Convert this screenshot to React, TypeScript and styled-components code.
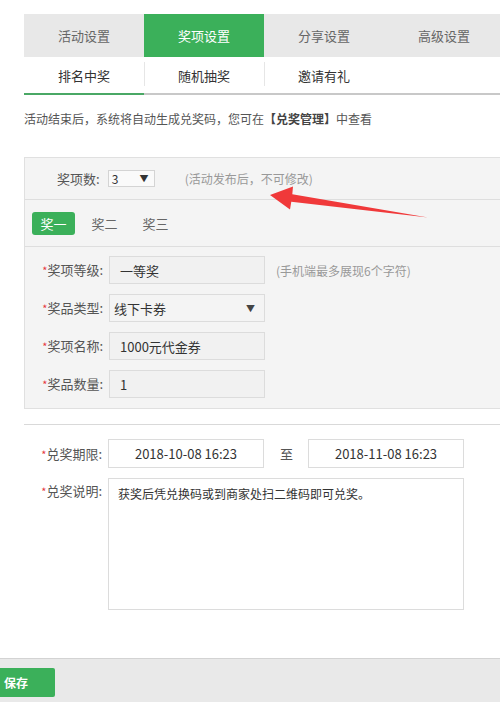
import React from "react";
import styled, { createGlobalStyle } from "styled-components";

const GREEN = "#3bb05a";

const GlobalStyle = createGlobalStyle`
  html, body { margin: 0; padding: 0; background: #fff; }
  body {
    font-family: "Noto Sans CJK SC", "Microsoft YaHei", sans-serif;
    color: #333;
    overflow: hidden;
  }
  * { box-sizing: border-box; }
`;

const Page = styled.div`
  position: relative;
  width: 500px;
  height: 702px;
  display: flex;
  flex-direction: column;
  overflow: hidden;
`;

const Main = styled.div`
  padding: 14px 0 0 24px;
  width: 540px;
`;

const TopTabs = styled.div`
  display: flex;
  background: #e8e8e8;
`;

const TopTab = styled.div<{ $active?: boolean }>`
  width: 120px;
  height: 43px;
  display: flex;
  align-items: center;
  justify-content: center;
  font-size: 13px;
  background: ${(p) => (p.$active ? GREEN : "#e8e8e8")};
  color: ${(p) => (p.$active ? "#fff" : "#666")};
`;

const SubTabs = styled.div`
  display: flex;
  border-bottom: 2px solid #c8c8c8;
`;

const SubTab = styled.div<{ $active?: boolean; $sep?: boolean }>`
  position: relative;
  width: 120px;
  height: 38px;
  margin-bottom: -2px;
  display: flex;
  align-items: center;
  justify-content: center;
  font-size: 13px;
  color: #333;
  border-bottom: 2px solid ${(p) => (p.$active ? "#4aa865" : "transparent")};
  &::before {
    content: "";
    display: ${(p) => (p.$sep ? "block" : "none")};
    position: absolute;
    left: 0;
    top: 5px;
    bottom: 7px;
    width: 1px;
    background: #e6e6e6;
  }
`;

const Info = styled.div`
  margin-top: 15px;
  font-size: 12px;
  line-height: 18px;
  color: #555;
  b { color: #444; font-weight: bold; }
`;

const Panel = styled.div`
  margin-top: 29px;
  background: #f4f4f4;
  border: 1px solid #e0e0e0;
  border-right: none;
`;

const CountRow = styled.div`
  height: 42px;
  display: flex;
  align-items: center;
  padding-left: 32px;
  border-bottom: 1px solid #dedede;
  font-size: 13px;
  color: #555;
`;

const MiniSelect = styled.div`
  width: 47px;
  height: 17px;
  margin-left: 8px;
  border: 1px solid #d4d4d4;
  background: #fafafa;
  display: flex;
  align-items: center;
  justify-content: space-between;
  padding: 0 5px 0 3px;
  font-size: 12px;
  color: #333;
  span { font-size: 9px; }
`;

const Hint = styled.span<{ $ml: number }>`
  margin-left: ${(p) => p.$ml}px;
  font-size: 12px;
  color: #999;
`;

const PrizeTabs = styled.div`
  height: 47px;
  display: flex;
  align-items: center;
  gap: 8px;
  padding-left: 7px;
  border-bottom: 1px solid #dedede;
`;

const PrizeTab = styled.div<{ $active?: boolean }>`
  width: 43px;
  height: 23px;
  border-radius: 3px;
  display: flex;
  align-items: center;
  justify-content: center;
  font-size: 13px;
  background: ${(p) => (p.$active ? GREEN : "transparent")};
  color: ${(p) => (p.$active ? "#fff" : "#666")};
`;

const FormBody = styled.div`
  padding: 9px 0 10px 0;
  display: flex;
  flex-direction: column;
  gap: 10px;
`;

const Row = styled.div<{ $top?: boolean }>`
  display: flex;
  align-items: ${(p) => (p.$top ? "flex-start" : "center")};
`;

const Label = styled.div<{ $w: number; $pt?: number }>`
  width: ${(p) => p.$w}px;
  padding-right: 6px;
  padding-top: ${(p) => p.$pt ?? 0}px;
  text-align: right;
  font-size: 13px;
  line-height: 18px;
  color: #555;
  white-space: nowrap;
  i { color: #e5383b; font-style: normal; font-size: 11px; }
`;

const Field = styled.div<{ $center?: boolean; $white?: boolean; $h?: number }>`
  width: 156px;
  height: ${(p) => p.$h ?? 28}px;
  border: 1px solid #dcdcdc;
  background: ${(p) => (p.$white ? "#fff" : "#f1f1f1")};
  display: flex;
  align-items: center;
  justify-content: ${(p) => (p.$center ? "center" : "space-between")};
  padding: ${(p) => (p.$center ? "0" : "0 10px 0 10px")};
  font-size: 13px;
  color: #333;
`;

const SelectField = styled(Field)`
  padding: 0 9px 0 4px;
  background: #f4f4f4;
  span { font-size: 9px; color: #444; }
`;

const Divider = styled.div`
  margin-top: 15px;
  height: 1px;
  background: #d9d9d9;
`;

const Bottom = styled.div`
  padding-top: 14px;
  display: flex;
  flex-direction: column;
  gap: 10px;
`;

const To = styled.span`
  margin: 0 15px 0 16px;
  font-size: 13px;
  color: #555;
`;

const TextArea = styled.div`
  width: 356px;
  height: 132px;
  border: 1px solid #dcdcdc;
  background: #fff;
  padding: 6px 9px;
  font-size: 12px;
  line-height: 18px;
  color: #333;
`;

const Footer = styled.div`
  margin-top: auto;
  height: 44px;
  background: #e9e9e9;
  border-top: 1px solid #d3d3d3;
  padding-top: 9px;
`;

const SaveButton = styled.div`
  width: 55px;
  height: 29px;
  background: ${GREEN};
  color: #fff;
  font-weight: bold;
  font-size: 12px;
  display: flex;
  align-items: center;
  padding-left: 4px;
  border-radius: 0 2px 2px 0;
`;

const Arrow = styled.svg`
  position: absolute;
  left: 0;
  top: 0;
  pointer-events: none;
`;

export default function App() {
  return (
    <Page>
      <GlobalStyle />
      <Main>
        <TopTabs>
          <TopTab>活动设置</TopTab>
          <TopTab $active>奖项设置</TopTab>
          <TopTab>分享设置</TopTab>
          <TopTab>高级设置</TopTab>
        </TopTabs>
        <SubTabs>
          <SubTab $active>排名中奖</SubTab>
          <SubTab $sep>随机抽奖</SubTab>
          <SubTab $sep>邀请有礼</SubTab>
        </SubTabs>
        <Info>
          活动结束后，系统将自动生成兑奖码，您可在<b>【兑奖管理】</b>中查看
        </Info>
        <Panel>
          <CountRow>
            奖项数:
            <MiniSelect>
              3<span>▼</span>
            </MiniSelect>
            <Hint $ml={30}>(活动发布后，不可修改)</Hint>
          </CountRow>
          <PrizeTabs>
            <PrizeTab $active>奖一</PrizeTab>
            <PrizeTab>奖二</PrizeTab>
            <PrizeTab>奖三</PrizeTab>
          </PrizeTabs>
          <FormBody>
            <Row>
              <Label $w={84}><i>*</i>奖项等级:</Label>
              <Field>一等奖</Field>
              <Hint $ml={11}>(手机端最多展现6个字符)</Hint>
            </Row>
            <Row>
              <Label $w={84}><i>*</i>奖品类型:</Label>
              <SelectField>
                线下卡券<span>▼</span>
              </SelectField>
            </Row>
            <Row>
              <Label $w={84}><i>*</i>奖项名称:</Label>
              <Field>1000元代金券</Field>
            </Row>
            <Row>
              <Label $w={84}><i>*</i>奖品数量:</Label>
              <Field>1</Field>
            </Row>
          </FormBody>
        </Panel>
        <Divider />
        <Bottom>
          <Row>
            <Label $w={84}><i>*</i>兑奖期限:</Label>
            <Field $center $white $h={29}>2018-10-08 16:23</Field>
            <To>至</To>
            <Field $center $white $h={29}>2018-11-08 16:23</Field>
          </Row>
          <Row $top>
            <Label $w={84} $pt={4}><i>*</i>兑奖说明:</Label>
            <TextArea>获奖后凭兑换码或到商家处扫二维码即可兑奖。</TextArea>
          </Row>
        </Bottom>
      </Main>
      <Footer>
        <SaveButton>保存</SaveButton>
      </Footer>
      <Arrow width="500" height="702" viewBox="0 0 500 702">
        <polygon
          points="270,195 293,186.5 292.3,194.3 428,217.5 291.3,201.7 290,209.5"
          fill="#f0393a"
        />
      </Arrow>
    </Page>
  );
}
